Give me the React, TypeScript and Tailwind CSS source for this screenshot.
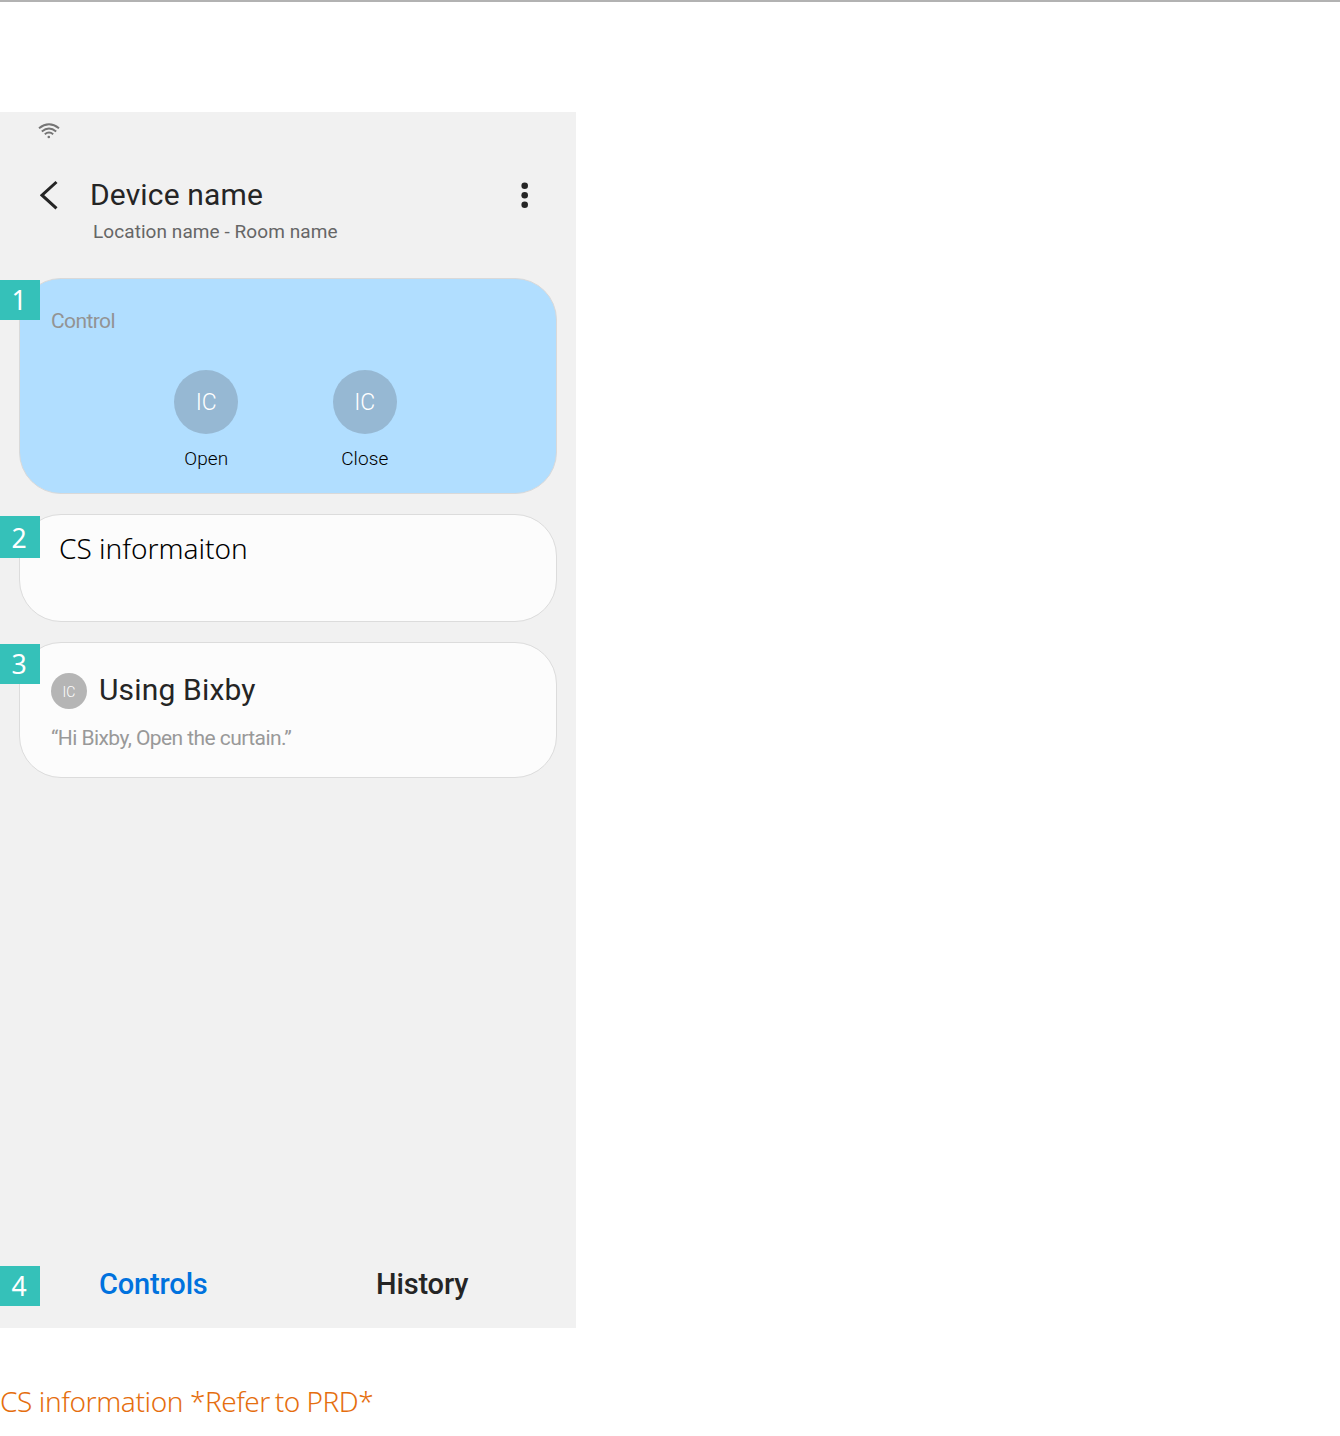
import React from "react";

const sans = "font-['Roboto','Liberation_Sans',sans-serif]";
const note = "font-['Noto_Sans','Open_Sans',sans-serif]";

function Badge({ n, className }: { n: number; className: string }) {
  return (
    <div className={`absolute left-0 flex w-10 justify-center bg-[#35c1b9] pr-px text-[28px] leading-[38px] text-white ${note} ${className}`}>
      <span className="inline-block h-10 scale-x-95">{n}</span>
    </div>
  );
}

function WifiIcon() {
  return (
    <svg width="22" height="16" viewBox="0 0 22 16" fill="none" stroke="#757575" strokeWidth="1.9">
      <path d="M1 5.3Q11-2.6 21 5.3" />
      <path d="M3.8 8.5Q11 2.5 18.2 8.5" />
      <path d="M6.8 11.3Q11 7.8 15.2 11.3" />
      <circle cx="10.8" cy="14" r="1.3" fill="#757575" stroke="none" />
    </svg>
  );
}

function Action({ label }: { label: string }) {
  return (
    <div className="flex w-16 flex-col items-center">
      <div className="flex size-16 items-center justify-center rounded-full bg-[#96b8d3] pt-0.5 text-[23px] font-light text-white">
        <span>IC</span>
      </div>
      <span className="mt-[13px] text-[19px] leading-6 font-light tracking-[0.1px] text-black">{label}</span>
    </div>
  );
}

export default function App() {
  return (
    <div className={`min-h-[1436px] w-full border-t-2 border-[#b2b2b2] bg-white ${sans}`}>
      <main className="relative mt-[110px] flex h-[1216px] w-[576px] flex-col bg-[#f1f1f1]">
        <div className="flex h-[52px] pt-[11px] pl-[38px]">
          <WifiIcon />
        </div>
        <header className="flex h-[114px] pl-10">
          <svg className="mt-4 shrink-0" width="20" height="30" viewBox="0 0 20 30" fill="none" stroke="#252525" strokeWidth="3">
            <path d="M16.5 2L2 15.2L16.5 28.4" />
          </svg>
          <div className="ml-[30px] flex-1">
            <h1 className="h-14 pt-[11px] text-[30px] leading-10 tracking-[0.14px] text-[#252525]">Device name</h1>
            <p className="pl-[3px] text-[19px] leading-6 tracking-[0.07px] text-[#666]">Location name - Room name</p>
          </div>
          <svg className="mt-[17px] mr-[45px] shrink-0" width="12" height="30" viewBox="0 0 12 30" fill="#252525">
            <circle cx="5.7" cy="4.7" r="3.3" />
            <circle cx="5.7" cy="14.2" r="3.3" />
            <circle cx="5.7" cy="23.7" r="3.3" />
          </svg>
        </header>

        <section className="mx-[19px] flex h-[216px] shrink-0 flex-col rounded-[42px] border border-[#d9d9d9] bg-[#b1deff] px-[31px] pt-7">
          <h2 className="text-[21px] leading-7 tracking-[-0.6px] text-[#939393]">Control</h2>
          <div className="mt-[35px] flex justify-center gap-[94.5px] pr-[5px]">
            <Action label="Open" />
            <Action label="Close" />
          </div>
        </section>

        <section className="mx-[19px] mt-5 h-[108px] shrink-0 rounded-[42px] border border-[#dcdcdc] bg-[#fcfcfc] pt-[13px] pl-[39px]">
          <h2 className={`text-[28px] leading-10 font-light text-black ${note}`}>CS informaiton</h2>
        </section>

        <section className="mx-[19px] mt-5 h-[136px] shrink-0 rounded-[42px] border border-[#dcdcdc] bg-[#fcfcfc] pt-7 pl-[31px]">
          <div className="flex h-10 items-center">
            <div className="flex size-9 items-center justify-center rounded-full bg-[#b5b5b5] pt-0.5 text-[14px] font-light text-white">IC</div>
            <h2 className="mb-0.5 ml-3 text-[30px] leading-10 tracking-[0.17px] text-[#252525]">Using Bixby</h2>
          </div>
          <p className="mt-[13px] text-[21px] leading-7 tracking-[-0.57px] text-[#999]">“Hi Bixby, Open the curtain.”</p>
        </section>

        <nav className="mt-auto mb-6 flex h-10 text-[29px] leading-10 font-medium tracking-[-0.15px]">
          <a className="ml-[99px] w-[277px] text-[#0072de]">Controls</a>
          <a className="text-[#252525]">History</a>
        </nav>

        <Badge n={1} className="top-[168px] h-10" />
        <Badge n={2} className="top-[404px] h-[42px] pt-0.5" />
        <Badge n={3} className="top-[532px] h-10" />
        <Badge n={4} className="top-[1154px] h-10" />
      </main>
      <p className={`mt-[53px] text-[28px] leading-10 font-light tracking-[-0.4px] whitespace-nowrap text-[#e56e0e] ${note}`}>
        CS information <span className="tracking-[-0.5px]">*Refer<span className="tracking-[-2.5px]"> </span>to PRD*</span>
      </p>
    </div>
  );
}
